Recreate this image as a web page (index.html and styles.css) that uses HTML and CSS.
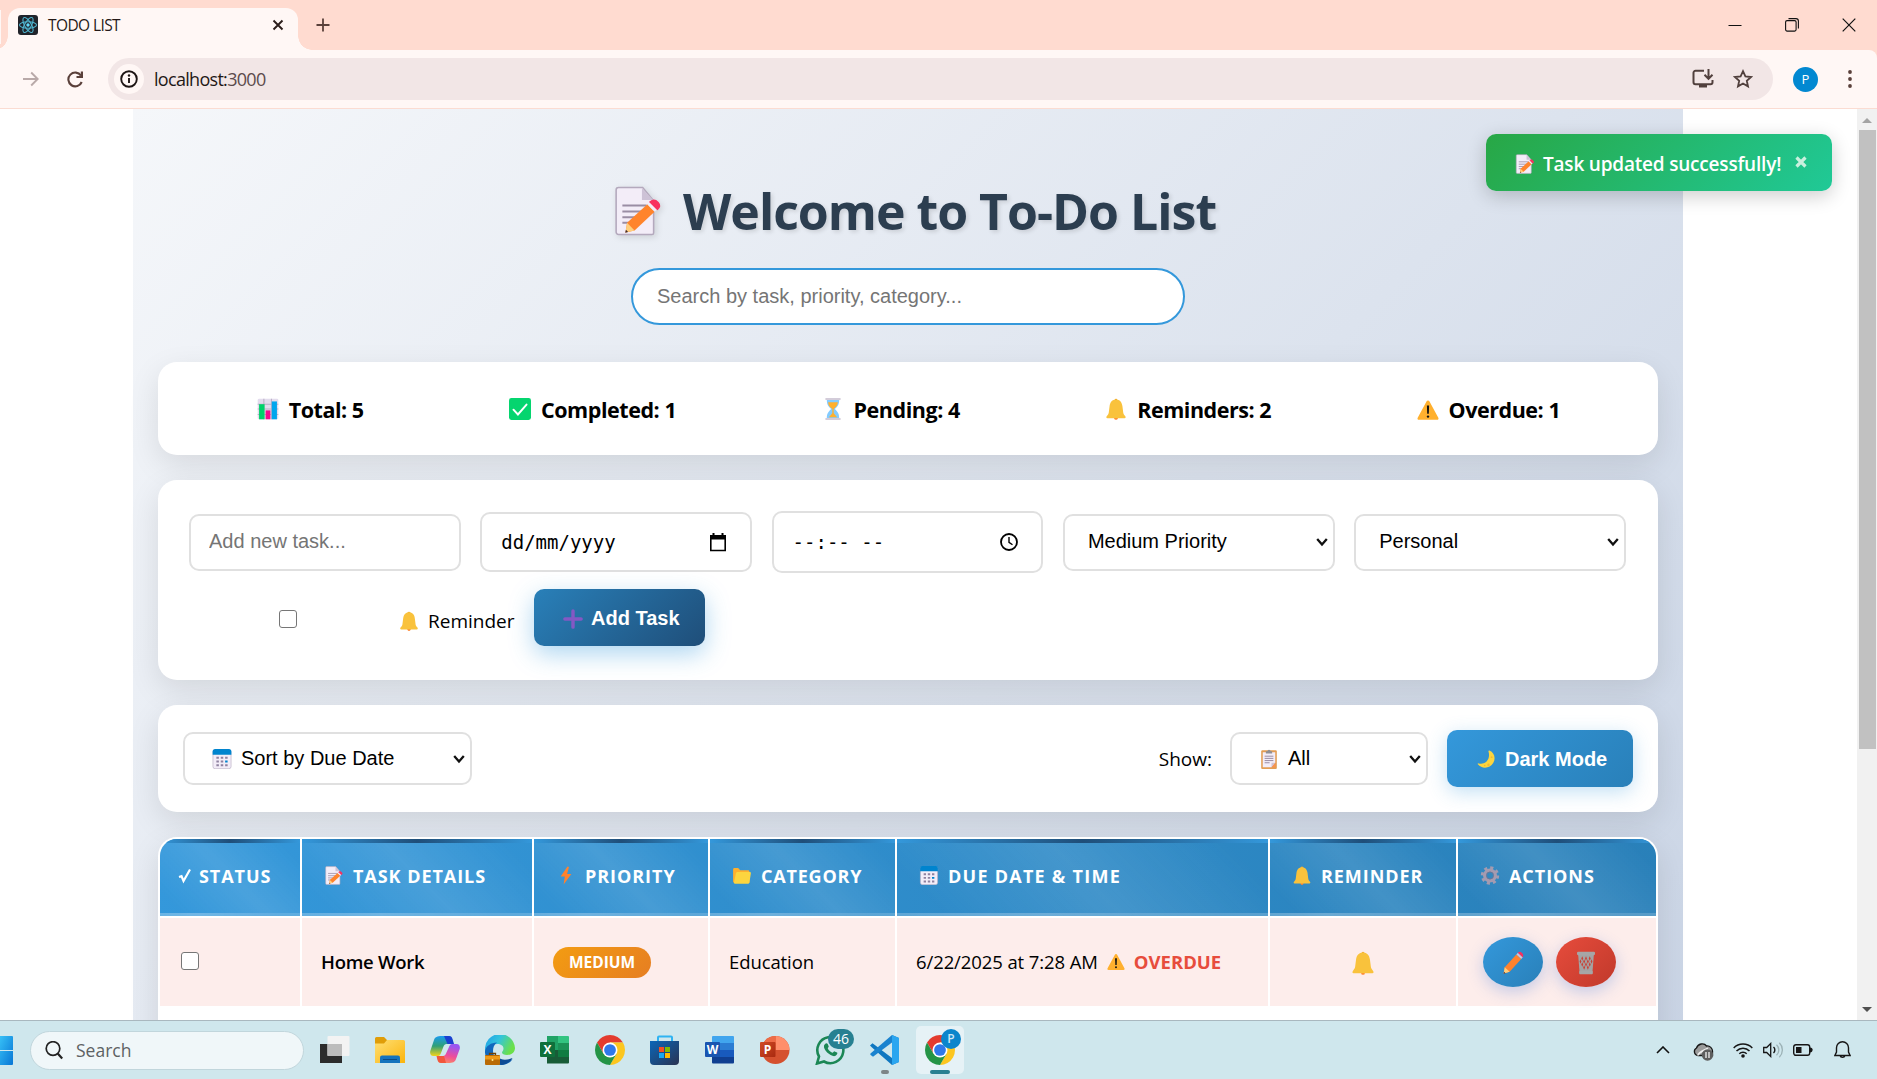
FILE: index.html
```html
<!DOCTYPE html>
<html lang="en">
<head>
<meta charset="utf-8">
<title>TODO LIST</title>
<link rel="stylesheet" href="styles.css">
</head>
<body>
<svg class="defs" aria-hidden="true">
  <defs>
    <linearGradient id="gFolder" x1="0" y1="0" x2="1" y2="1"><stop offset="0" stop-color="#ffdf74"/><stop offset="1" stop-color="#fbb40b"/></linearGradient>
    <linearGradient id="gWin" x1="0" y1="0" x2="1" y2="1"><stop offset="0" stop-color="#37c0f6"/><stop offset="1" stop-color="#0876d5"/></linearGradient>
    <linearGradient id="gStore" x1="0" y1="0" x2="1" y2="1"><stop offset="0" stop-color="#0a66b8"/><stop offset="1" stop-color="#2a3352"/></linearGradient>
    <linearGradient id="gCopA" x1="0" y1="0" x2="0" y2="1"><stop offset="0" stop-color="#1a9bf0"/><stop offset=".5" stop-color="#2f9f76"/><stop offset="1" stop-color="#f2d41c"/></linearGradient>
    <linearGradient id="gCopB" x1=".3" y1="0" x2="0" y2="1"><stop offset="0" stop-color="#9a55f0"/><stop offset=".5" stop-color="#ee4d9a"/><stop offset="1" stop-color="#ff9a55"/></linearGradient>
    <linearGradient id="gEdge" x1="0" y1="0" x2="1" y2=".4"><stop offset="0" stop-color="#1f9de8"/><stop offset=".5" stop-color="#33c4dd"/><stop offset="1" stop-color="#6be04a"/></linearGradient>
    <linearGradient id="gPpt" x1="0" y1="0" x2="1" y2="1"><stop offset="0" stop-color="#cf4a25"/><stop offset="1" stop-color="#a92a10"/></linearGradient>
  </defs>
  <symbol id="memo" viewBox="0 0 32 32">
    <path d="M3.500 1h15.500L26 9.500V30a1 1 0 0 1-1 1H3.500a1.500 1.500 0 0 1-1.500-1.500v-27A1.500 1.500 0 0 1 3.500 1z" fill="#f3edf8" stroke="#b4a9bd"/>
    <path d="M18.500 1.500V9h7.300z" fill="#cdc2d6"/>
    <path d="M6 12.500h15.500M6 16.300h15.500M6 20h11M6 23.500h7" stroke="#9a8da4" stroke-width="1.300"/>
    <path d="M9 23.500l13-11.800 4.600 4.700-12.800 12L8 29.800z" fill="#ff842c"/>
    <path d="M9 23.500l4.800 4.900L8 29.800z" fill="#ffce7c"/><path d="M8.300 28l1.400 1.400-1.900.5z" fill="#402a32"/>
    <path d="M22 11.700l1.800-1.500 4.600 4.700-1.800 1.500z" fill="#f3edf8"/>
    <path d="M23.800 10.200c2-1.700 3.500-1.200 5 .4 1.500 1.700 1.200 3-.4 4.300z" fill="#f8315f" stroke="#f8315f"/>
  </symbol>
  <symbol id="chart" viewBox="0 0 32 32">
    <rect x="1" y="1" width="30" height="30" rx="2" fill="#e3dced"/>
    <path d="M10 1v30M21 1v30M1 9h30M1 16h30M1 24h30" stroke="#b9afc5" stroke-width="1.500"/>
    <path d="M3 9h8v22H3z" fill="#00d26a"/><path d="M12.500 18h7v13h-7z" fill="#f70a8d"/><path d="M21.500 5H29v26h-7.500z" fill="#00a6ed"/>
  </symbol>
  <symbol id="done" viewBox="0 0 32 32">
    <rect width="32" height="32" rx="3.500" fill="#05d56f"/>
    <path d="M6.500 17l6.500 7L25.500 9.500" fill="none" stroke="#fff" stroke-width="2.800" stroke-linecap="round"/>
  </symbol>
  <symbol id="hourglass" viewBox="0 0 32 32">
    <path d="M7 2h18c0 7-1.500 9.500-6.500 14 5 4.500 6.500 7 6.500 14H7c0-7 1.500-9.500 6.500-14C8.500 11.500 7 9 7 2z" fill="#83cbff"/>
    <path d="M9 6h14c0 4-3 7-6 10v6l5 6H10l5-6v-6C11 13 9 10 9 6z" fill="#ffb02e"/>
    <path d="M5 0h22v3H5zM5 29h22v3H5z" fill="#d3ccd9"/>
  </symbol>
  <symbol id="bell" viewBox="0 0 32 32">
    <circle cx="16" cy="29.300" r="2.500" fill="#ff822d"/><circle cx="16" cy="3" r="2" fill="#eda72c"/>
    <path d="M16 2c5.500 0 8.600 4 9.300 9.500l1.200 9.500c.3 2.200 1.300 3.500 3 5.500.8 1 .9 3-1 3h-25c-1.900 0-1.800-2-1-3 1.700-2 2.700-3.300 3-5.500l1.200-9.500C7.400 6 10.500 2 16 2z" fill="#f9c23c"/>
  </symbol>
  <symbol id="warn" viewBox="0 0 32 32">
    <path d="M16 3.500c1 0 1.600.5 2 1.300l13 24c.8 1.700 0 3-1.700 3H2.700c-1.700 0-2.500-1.300-1.700-3l13-24c.4-.8 1-1.300 2-1.300z" fill="#ffb02e"/>
    <path d="M14.400 11h3.200l-.4 12h-2.400z" fill="#111"/><circle cx="16" cy="27" r="1.700" fill="#111"/>
  </symbol>
  <symbol id="plus" viewBox="0 0 32 32"><path d="M16 3v26M3 16h26" stroke="#8458c4" stroke-width="5.500" stroke-linecap="round"/></symbol>
  <symbol id="calendar" viewBox="0 0 32 32">
    <rect x="1.500" y="1.500" width="29" height="30" rx="3.500" fill="#f3edf8" stroke="#b5abc0"/>
    <path d="M1 9V4a4 4 0 0 1 4-4h22a4 4 0 0 1 4 4v5z" fill="#0084ce"/>
    <path d="M7 14h4M14 14h4M21 14h4M7 20h4M14 20h4M7 26h4M14 26h4M21 26h4" stroke="#8f82a0" stroke-width="3.200"/><path d="M21 20h4" stroke="#0084ce" stroke-width="3.200"/>
  </symbol>
  <symbol id="clipboard" viewBox="0 0 32 32">
    <rect x="3.500" y="2" width="25" height="30" rx="1.800" fill="#e39d54"/><path d="M6 5h20v17l-6 7H6z" fill="#f3edf8"/><path d="M20 22h6l-6 7z" fill="#cdc4d6"/><path d="M26 22v7h-6z" fill="#fa9150"/>
    <path d="M11 3.500h2.500a2.500 2.500 0 0 1 5 0H21V7H11z" fill="#8f8f96"/>
    <path d="M9 11.500h14M9 15h14M9 18.500h14M9 22h8" stroke="#9a8da4" stroke-width="1.600"/>
  </symbol>
  <symbol id="moon" viewBox="0 0 32 32">
    <path d="M21.500 2.500c8 3.500 10.500 12.500 6 20C22.500 31 10 33 3 24.500c-.8-1 .2-1.800 1.200-1.500C16 26 23.500 15 20 4c-.3-1 .4-2 1.500-1.500z" fill="#fcd53f"/>
    <circle cx="25" cy="13" r="1.500" fill="#f4b92f"/><circle cx="20" cy="25" r="2" fill="#f4b92f"/><circle cx="14" cy="26.500" r="1.300" fill="#f4b92f"/>
  </symbol>
  <symbol id="bolt" viewBox="0 0 32 32"><path d="M18.500 1L7 17.500h7L12 31l13-17.500h-7.200L21 1.500z" fill="#ff822d"/></symbol>
  <symbol id="folder" viewBox="0 0 32 32">
    <path d="M1 6a2.500 2.500 0 0 1 2.500-2.500h6L13 7h13a2.500 2.500 0 0 1 2.500 2.500V28H3a2 2 0 0 1-2-2z" fill="#ffb02e"/>
    <path d="M8.500 10H29a2 2 0 0 1 2 2.300l-2.500 15.500A2.600 2.600 0 0 1 26 30H4.500a2 2 0 0 1-2-2.300l3.300-15.500A2.800 2.800 0 0 1 8.500 10z" fill="#fcd53f"/>
  </symbol>
  <symbol id="gear" viewBox="0 0 32 32">
    <circle cx="16" cy="16" r="13" fill="none" stroke="#a59bb0" stroke-width="5" stroke-dasharray="5.200 5"/>
    <circle cx="16" cy="16" r="9" fill="none" stroke="#a59bb0" stroke-width="5.500"/><circle cx="16" cy="16" r="6" fill="none" stroke="#7d7189" stroke-width="1.200"/>
  </symbol>
  <symbol id="pencil" viewBox="0 0 32 32">
    <path d="M5 21.500L20.500 4.500l6.500 6L11.500 27.500 3.500 30z" fill="#ff822d"/><path d="M5 21.500l6.500 6-8 2.500z" fill="#ffce7c"/><path d="M4 27.500l2 2-2.500.7z" fill="#402a32"/>
    <path d="M20.500 4.500l2-2.200 6.500 6-2 2.200z" fill="#cdc4d6"/><path d="M22.500 2.300c1.500-1.600 3.300-1.800 5.200 0 2 1.800 2.700 4.300 1.300 6z" fill="#f8315f"/>
  </symbol>
  <symbol id="trash" viewBox="0 0 32 32">
    <path d="M5.500 4h21l-2 25.500h-17z" fill="#a3a3a3"/>
    <path d="M11 7l-1.300 3 1.300 3 1.300-3zM16 7l-1.300 3 1.300 3 1.300-3zM21 7l-1.300 3 1.300 3 1.300-3zM11 15l-1.300 3 1.300 3 1.300-3zM16 15l-1.300 3 1.300 3 1.300-3zM21 15l-1.300 3 1.300 3 1.300-3zM13.500 11l-1.300 3 1.300 3 1.300-3zM18.500 11l-1.300 3 1.300 3 1.300-3zM13.500 19l-1.300 3 1.300 3 1.300-3zM18.500 19l-1.300 3 1.300 3 1.300-3zM8.500 11l-1 3 1 3 1.300-3zM23.500 11l-1.300 3 1.300 3 1-3z" fill="#c94236"/>
    <rect x="4" y="1" width="24" height="4.500" rx="1.500" fill="#a6a6a6"/><rect x="7" y="26.500" width="18" height="4.500" rx="1" fill="#a6a6a6"/>
  </symbol>
  <symbol id="caret" viewBox="0 0 12 10"><path d="M1.200 2L6 7.500 10.800 2" fill="none" stroke="#111" stroke-width="2.300"/></symbol>
  <symbol id="chrome" viewBox="2 2 44 44">
    <path d="M4.950 13A22 22 0 0 1 43.050 13H24V24L14.470 29.500Z" fill="#e33b2e"/>
    <path d="M43.050 13A22 22 0 0 1 24 46L33.530 29.500 24 24V13Z" fill="#fcc61f"/>
    <path d="M24 46A22 22 0 0 1 4.950 13L14.470 29.500 24 24 33.530 29.500Z" fill="#249446"/>
    <circle cx="24" cy="24" r="11" fill="#fff"/><circle cx="24" cy="24" r="8.600" fill="#2f78ea"/>
  </symbol>
</svg>

<header class="tabstrip">
  <div class="prev-tab"></div>
  <div class="tab">
    <svg class="favicon" viewBox="0 0 20 20"><rect width="20" height="20" rx="3" fill="#20232a"/><g fill="none" stroke="#4fb5cf" stroke-width="1.100"><ellipse cx="10" cy="10" rx="8.500" ry="3.300"/><ellipse cx="10" cy="10" rx="8.500" ry="3.300" transform="rotate(60 10 10)"/><ellipse cx="10" cy="10" rx="8.500" ry="3.300" transform="rotate(120 10 10)"/></g><circle cx="10" cy="10" r="1.700" fill="#61dafb"/></svg>
    <span class="tab-title">TODO LIST</span>
    <svg class="tab-close" viewBox="0 0 12 12"><path d="M1.500 1.500l9 9M10.500 1.500l-9 9" stroke="#2b1d1a" stroke-width="1.900"/></svg>
  </div>
  <svg class="new-tab" viewBox="0 0 14 14"><path d="M7 .5v13M.5 7h13" stroke="#5a403a" stroke-width="1.800"/></svg>
  <div class="window-buttons">
    <svg viewBox="0 0 14 14"><path d="M.5 7.500h13" stroke="#111" stroke-width="1"/></svg>
    <svg viewBox="0 0 14 14"><rect x=".6" y="2.600" width="10.500" height="10.500" rx="1.500" fill="none" stroke="#111" stroke-width="1.100"/><path d="M3.500.6h7.500a2.400 2.400 0 0 1 2.400 2.400v7.500" fill="none" stroke="#111" stroke-width="1.100"/></svg>
    <svg viewBox="0 0 14 14"><path d="M.7.7l12.600 12.600M13.300.7L.7 13.300" stroke="#111" stroke-width="1.200"/></svg>
  </div>
</header>

<nav class="toolbar">
  <svg class="forward" viewBox="0 0 16 16"><path d="M0 8h14M8.200 1.500L14.700 8l-6.500 6.500" fill="none" stroke="#b9a9a8" stroke-width="1.900"/></svg>
  <svg class="reload" viewBox="0 0 17 17"><path d="M14.700 11A6.900 6.900 0 1 1 14 4.600" fill="none" stroke="#5a403a" stroke-width="2.100"/><path d="M16 .5v6.500H9.500V5h4.300V.5z" fill="#5a403a"/></svg>
  <div class="address">
    <span class="site-info"><svg viewBox="0 0 18 18"><circle cx="9" cy="9" r="7.800" fill="none" stroke="#1d1514" stroke-width="1.900"/><path d="M9 8v5" stroke="#1d1514" stroke-width="1.900"/><circle cx="9" cy="5.500" r="1.200" fill="#1d1514"/></svg></span>
    <span class="url">localhost:<span class="port">3000</span></span>
    <svg class="install" viewBox="0 0 22 20"><path d="M12 1.800H3.500A2 2 0 0 0 1.500 3.800v9.400a2 2 0 0 0 2 2h15a2 2 0 0 0 2-2V11" fill="none" stroke="#51403d" stroke-width="2"/><path d="M7 15h8v3.500H7z" fill="#51403d"/><path d="M16.500 0v9M12.500 5.800l4 4 4-4" fill="none" stroke="#51403d" stroke-width="2"/></svg>
    <svg class="star" viewBox="0 0 20 20"><path d="M10 2.200l2.400 5.200 5.600.6-4.200 3.800 1.200 5.600-5-2.900-5 2.900 1.200-5.600L2 8l5.600-.6z" fill="none" stroke="#51403d" stroke-width="1.800"/></svg>
  </div>
  <span class="avatar">P</span>
  <svg class="menu" viewBox="0 0 4 18"><g fill="#5a403a"><circle cx="2" cy="2" r="1.900"/><circle cx="2" cy="9" r="1.900"/><circle cx="2" cy="16" r="1.900"/></g></svg>
</nav>

<main class="viewport">
  <div class="app">
    <h1 class="title"><svg class="title-icon"><use href="#memo"/></svg><span>Welcome to To-Do List</span></h1>
    <input class="search" type="text" placeholder="Search by task, priority, category...">

    <section class="card stats">
      <div class="stat"><svg><use href="#chart"/></svg><span>Total: 5</span></div>
      <div class="stat"><svg><use href="#done"/></svg><span>Completed: 1</span></div>
      <div class="stat"><svg><use href="#hourglass"/></svg><span>Pending: 4</span></div>
      <div class="stat"><svg><use href="#bell"/></svg><span>Reminders: 2</span></div>
      <div class="stat"><svg><use href="#warn"/></svg><span>Overdue: 1</span></div>
    </section>

    <section class="card form">
      <div class="fields">
        <input class="field" type="text" placeholder="Add new task...">
        <div class="field date"><span>dd/mm/yyyy</span><svg viewBox="0 0 18 20"><path d="M1.800 4h14.400v14.500H1.800z" fill="none" stroke="#000" stroke-width="1.600"/><path d="M1 3h16v4.500H1zM3.500 1h2v3h-2zM12.500 1h2v3h-2z"/></svg></div>
        <div class="field time"><span>--:-- --</span><svg viewBox="0 0 18 20"><circle cx="9" cy="10" r="8" fill="none" stroke="#000" stroke-width="1.800"/><path d="M9 5v5.300l3.500 2.500" fill="none" stroke="#000" stroke-width="1.400"/></svg></div>
        <div class="field select"><span>Medium Priority</span><svg class="caret"><use href="#caret"/></svg></div>
        <div class="field select"><span>Personal</span><svg class="caret"><use href="#caret"/></svg></div>
      </div>
      <div class="form-actions">
        <span class="checkbox"></span>
        <label class="reminder"><svg><use href="#bell"/></svg><span>Reminder</span></label>
        <button class="btn add"><svg><use href="#plus"/></svg><span>Add Task</span></button>
      </div>
    </section>

    <section class="card controls">
      <div class="select sort"><svg class="emoji"><use href="#calendar"/></svg><span>Sort by Due Date</span><svg class="caret"><use href="#caret"/></svg></div>
      <span class="show">Show:</span>
      <div class="select filter"><svg class="emoji"><use href="#clipboard"/></svg><span>All</span><svg class="caret"><use href="#caret"/></svg></div>
      <button class="btn dark"><svg><use href="#moon"/></svg><span>Dark Mode</span></button>
    </section>

    <section class="table">
      <div class="row head">
        <div class="th first"><svg class="tick" viewBox="0 0 14 16"><path d="M1 9l2.500-.8L5.500 13 12 1.500" fill="none" stroke="#fff" stroke-width="2.200"/></svg><span>STATUS</span></div>
        <div class="th"><svg><use href="#memo"/></svg><span>TASK DETAILS</span></div>
        <div class="th"><svg><use href="#bolt"/></svg><span>PRIORITY</span></div>
        <div class="th"><svg><use href="#folder"/></svg><span class="tight">CATEGORY</span></div>
        <div class="th"><svg><use href="#calendar"/></svg><span class="wide">DUE DATE &amp; TIME</span></div>
        <div class="th"><svg><use href="#bell"/></svg><span>REMINDER</span></div>
        <div class="th"><svg><use href="#gear"/></svg><span>ACTIONS</span></div>
      </div>
      <div class="row body">
        <div class="td"><span class="checkbox"></span></div>
        <div class="td"><span class="task">Home Work</span></div>
        <div class="td"><span class="badge">MEDIUM</span></div>
        <div class="td"><span class="cat">Education</span></div>
        <div class="td"><span class="due">6/22/2025 at 7:28 AM</span><svg class="due-icon"><use href="#warn"/></svg><span class="overdue">OVERDUE</span></div>
        <div class="td center"><svg class="row-bell"><use href="#bell"/></svg></div>
        <div class="td actions"><button class="round edit"><svg><use href="#pencil"/></svg></button><button class="round delete"><svg><use href="#trash"/></svg></button></div>
      </div>
    </section>
  </div>
  <aside class="scrollbar"><span class="up"></span><span class="thumb"></span><span class="down"></span></aside>
  <div class="toast"><svg class="toast-icon"><use href="#memo"/></svg><span class="toast-text">Task updated successfully!</span><svg class="toast-close" viewBox="0 0 12 12"><path d="M1.500 1.500l9 9M10.500 1.500l-9 9" stroke="#c9f0de" stroke-width="3.200"/></svg></div>
</main>

<footer class="taskbar">
  <svg class="start" viewBox="0 0 13 29"><path d="M0 0h12a1 1 0 0 1 1 1v13H0zM0 15h13v13a1 1 0 0 1-1 1H0z" fill="url(#gWin)"/></svg>
  <div class="tb-search"><svg viewBox="0 0 18 19"><circle cx="8" cy="7.500" r="6.800" fill="none" stroke="#222" stroke-width="1.700"/><path d="M12.700 12.500l4.500 5" stroke="#222" stroke-width="2.200"/></svg><span>Search</span></div>
  <div class="apps">
    <svg viewBox="0 0 30 30"><path d="M0 9h22v19H0z" fill="#2c2c2c"/><rect x="7.500" y="1" width="22" height="20" rx="1" fill="#f3f3f3"/><path d="M7.500 9H22v12H7.500z" fill="#bcbcbc"/></svg>
    <svg viewBox="0 0 30 30"><path d="M0 3.500A1.500 1.500 0 0 1 1.500 2H9l3 3v4H0z" fill="#e09d08"/><path d="M0 8.500h9L12 5h16.500A1.500 1.500 0 0 1 30 6.500V28H0z" fill="url(#gFolder)"/><path d="M5 28v-5.500a2 2 0 0 1 2-2h16a2 2 0 0 1 2 2V28z" fill="#1573bd"/><path d="M8 24.500h14" stroke="#0a4b87"/></svg>
    <svg viewBox="0 0 30 30"><path d="M12 1h6.500c2 0 3 1 3.500 3l1.500 5h-7c-1.500 0-2.500 1-3 2.500L11 18c-.8 2.500-2 3-4 3H3.500C.5 21-.3 18.500.3 16L4 5c1-3 3-4 8-4z" fill="url(#gCopA)"/><path d="M14 1h5c2 0 3 1 3.500 3L24 9h-6.500z" fill="#1a3fd0"/><path d="M18 28h-6.500c-2 0-3-1-3.500-3l-1-4h6c1.500 0 2.500-1 3-2.500L19 12c.8-2.500 2-3 4-3h3.500c3 0 3.800 2.500 3.200 5L26 24c-1 3-3 4-8 4z" fill="url(#gCopB)"/><path d="M16 28h-5c-2 0-3-1-3.500-3l-1-4H14z" fill="#f2573c"/></svg>
    <svg viewBox="0 0 30 30"><path d="M0 15A15 15 0 0 1 30 13c0 4-3 7-8 7-3 0-5-1-5-2.500 0-1 1.500-1.500 1.500-4 0-3-3-4.500-6-4.500C6 9 1 14 0 18z" fill="url(#gEdge)"/><path d="M0 16c1-5 6-8.500 12-8.500-3 2-4 5-4 8.500 0 7 6 11 12 10.500 4 0 6-1.500 7.500-2.500-2 4-7 6-12 6C6 30-.5 24 0 16z" fill="#1168bd"/><path d="M13 22c3 3.500 9 3.500 14.500 1-2 4-7 7-12 7z" fill="#0c4b95"/><rect y="20" width="15" height="10" rx="1" fill="#b96a04"/><path d="M0 21h15v3.500H0z" fill="#ed9a19"/><path d="M4.500 20v-1.500h6V20" fill="none" stroke="#6e4208" stroke-width="1.300"/><circle cx="7.500" cy="25" r="1" fill="#ffe78a"/></svg>
    <svg viewBox="0 0 30 30"><path d="M7 1h11v14H7z" fill="#21a366"/><path d="M18 1h10a1 1 0 0 1 1 1v6H18z" fill="#33c481"/><path d="M18 8h11v7H18z" fill="#1c9257"/><path d="M7 15h11v7H7zM7 22h22v5.500a1 1 0 0 1-1 1H7z" fill="#185c37"/><path d="M18 15h11v7H18z" fill="#107c41"/><rect y="7" width="15" height="15" rx="1" fill="#0f703b"/><text x="7.500" y="18.800" class="glyph">X</text></svg>
    <svg><use href="#chrome"/></svg>
    <svg viewBox="0 0 30 30"><path d="M8 7V2.500A1 1 0 0 1 9 1.500h12a1 1 0 0 1 1 1V7" fill="none" stroke="#2fb3f2" stroke-width="2"/><path d="M0 6h29v20a4 4 0 0 1-4 4H4a4 4 0 0 1-4-4z" fill="url(#gStore)"/><path d="M9 12h5v5H9z" fill="#f25022"/><path d="M15 12h5v5h-5z" fill="#7fba00"/><path d="M9 18h5v5H9z" fill="#16a7f2"/><path d="M15 18h5v5h-5z" fill="#ffb900"/></svg>
    <svg viewBox="0 0 30 30"><path d="M7 2a1 1 0 0 1 1-1h20a1 1 0 0 1 1 1v6H7z" fill="#41a5ee"/><path d="M7 8h22v7H7z" fill="#2b7cd3"/><path d="M7 15h22v7H7z" fill="#185abd"/><path d="M7 22h22v5.500a1 1 0 0 1-1 1H8a1 1 0 0 1-1-1z" fill="#103f91"/><rect y="7" width="15" height="15" rx="1" fill="#1a55b0"/><text x="7.500" y="18.800" class="glyph">W</text></svg>
    <svg viewBox="0 0 30 30"><circle cx="15.500" cy="15" r="14" fill="#d5512f"/><path d="M15.500 1a14 14 0 0 1 14 14h-14z" fill="#ff8f6b"/><path d="M15.500 1v14H1.500a14 14 0 0 1 14-14z" fill="#ed6c47"/><rect y="7" width="15.500" height="15" rx="1" fill="url(#gPpt)"/><text x="7.500" y="18.800" class="glyph">P</text></svg>
    <div class="app-badge"><svg viewBox="0 0 30 30"><path d="M2 28.500l2-7A13 13 0 1 1 9 26.500z" fill="none" stroke="#1b8755" stroke-width="2.600"/><path d="M10 9c1-1.200 2.200-1 2.700 0l1 2.300c.3.700-1.200 1.700-.9 2.300 1 2 2.600 3.400 4.600 4.200.7.200 1.500-1.700 2.200-1.400l2.400 1.200c1 .5-.3 3-2 3.500-4 1-12-6-11-10.500z" fill="#1b8755"/></svg><span class="count">46</span></div>
    <svg viewBox="0 0 30 30" class="vscode"><path d="M22 0l7 3v24l-7 3L2 12.500 0 10.500l2.500-2.300L22 23z" fill="#0f77c0"/><path d="M22 0l7 3v24l-7 3z" fill="#2aa6f0"/><path d="M22 7.500L3 21.800.3 19.700l.2-1.200L22 0z" fill="#1a83cf"/></svg>
  </div>
  <div class="active-app"><svg><use href="#chrome"/></svg><span class="profile">P</span></div>
  <div class="tray">
    <svg class="t-up" viewBox="0 0 14 8"><path d="M1 7l6-6 6 6" fill="none" stroke="#111" stroke-width="1.600"/></svg>
    <svg class="t-cloud" viewBox="0 0 21 19"><path d="M5 13.500A4 4 0 0 1 3.500 6C5 1.500 11 .5 13.500 4c3.500-.5 6 2.500 6 5v4.500z" fill="#9b9b9b" stroke="#161616" stroke-width="1.300"/><path d="M5 13.500c0-3 6-5 10-7" stroke="#eee" stroke-width="2" fill="none"/><circle cx="14.500" cy="13" r="5.700" fill="#5d5d5d"/><path d="M13 10v6M16 10v6" stroke="#fff" stroke-width="1.200"/></svg>
    <svg class="t-wifi" viewBox="0 0 20 16"><g fill="none" stroke="#161616" stroke-width="1.500"><path d="M.7 6a13 13 0 0 1 18.600 0M3.500 9a9 9 0 0 1 13 0M6.300 11.800a5.200 5.200 0 0 1 7.400 0"/></g><circle cx="10" cy="14" r="1.800" fill="#161616"/></svg>
    <svg class="t-sound" viewBox="0 0 20 16"><path d="M.7 5.500h3l4-4v13l-4-4h-3z" fill="none" stroke="#161616" stroke-width="1.300"/><path d="M10.500 5a4 4 0 0 1 0 6" fill="none" stroke="#161616" stroke-width="1.400"/><path d="M13.500 2.800a7 7 0 0 1 0 10.400M16.300.8a10 10 0 0 1 0 14.400" fill="none" stroke="#9db3b7" stroke-width="1.300"/></svg>
    <svg class="t-battery" viewBox="0 0 20 12"><rect x=".7" y=".7" width="16" height="10.600" rx="2.200" fill="none" stroke="#161616" stroke-width="1.400"/><rect x="3" y="3" width="5.500" height="6" fill="#161616"/><path d="M17 3.500c4 0 3 5 0 5z" fill="#161616"/></svg>
    <svg class="t-bell" viewBox="0 0 17 18"><path d="M8.500.8a6 6 0 0 1 6 6v4.200l1.600 3.500H.9L2.500 11V6.800a6 6 0 0 1 6-6zM6 14.500a2.600 2.600 0 0 0 5 0" fill="none" stroke="#161616" stroke-width="1.400"/></svg>
  </div>
</footer>
</body>
</html>
```
FILE: styles.css
```css
* { box-sizing: border-box; }
body { margin: 0; width: 1877px; height: 1079px; overflow: hidden; display: flex; flex-direction: column; background: #fff; font-family: "Open Sans", "Noto Sans", sans-serif; color: #000; }
svg { display: block; flex: none; }
span { white-space: nowrap; }
button { border: 0; margin: 0; padding: 0; }
.defs { position: absolute; width: 0; height: 0; }

/* browser chrome */
.tabstrip { height: 50px; flex: none; display: flex; align-items: center; background: #ffdbd0; }
.prev-tab { align-self: flex-start; width: 1px; height: 34px; margin: 10px 7px 0 0; background: #fff7f5; }
.tab { position: relative; align-self: flex-end; width: 290px; height: 42px; display: flex; align-items: center; padding: 0 14px 8px 10px; background: #fff7f5; border-radius: 12px 12px 0 0; }
.tab::before, .tab::after { content: ""; position: absolute; bottom: 0; width: 14px; height: 14px; }
.tab::before { left: -14px; background: radial-gradient(circle at 0 0, transparent 13.500px, #fff7f5 14px); }
.tab::after { right: -14px; background: radial-gradient(circle at 100% 0, transparent 13.500px, #fff7f5 14px); }
.favicon { width: 20px; height: 20px; }
.tab-title { margin-left: 10px; font-size: 15.500px; letter-spacing: -.6px; color: #241917; }
.tab-close { width: 12px; height: 12px; margin-left: auto; }
.new-tab { width: 14px; height: 14px; margin-left: 18px; }
.window-buttons { margin-left: auto; margin-right: 21px; display: flex; gap: 43px; }
.window-buttons svg { width: 14px; height: 14px; }
.toolbar { height: 59px; flex: none; display: flex; align-items: center; background: #fff7f5; border-bottom: 1px solid #fbdcd2; border-top-right-radius: 8px; box-shadow: 8px -8px 0 #ffdbd0; }
.forward { width: 16px; height: 16px; margin-left: 23px; }
.reload { width: 17px; height: 17px; margin-left: 28px; }
.address { width: 1665px; height: 42px; margin-left: 24px; display: flex; align-items: center; background: #f2e6e6; border-radius: 21px; padding: 0 20px 0 6px; }
.site-info { width: 30px; height: 30px; display: flex; align-items: center; justify-content: center; background: #fff7f5; border-radius: 50%; }
.site-info svg { width: 18px; height: 18px; }
.url { margin-left: 10px; font-size: 18px; letter-spacing: -.7px; color: #1f1817; }
.port { color: #5c4b4c; }
.install { width: 22px; height: 20px; margin-left: auto; }
.star { width: 20px; height: 20px; margin-left: 19px; }
.avatar { width: 25px; height: 25px; margin-left: 20px; border-radius: 50%; background: #0288d1; color: #fff; font-size: 13px; line-height: 25px; text-align: center; }
.menu { width: 4px; height: 18px; margin-left: 30px; }

/* page */
.viewport { position: relative; height: 911px; flex: none; display: flex; background: #fff; overflow: hidden; }
.app { width: 1550px; margin-left: 133px; padding: 0 25px; background: linear-gradient(135deg, #f5f7fa 0%, #c3cfe2 100%) 0 0 / 100% 1320px; }
.title { height: 62px; margin: 71px 0 26px; padding-left: 12px; display: flex; align-items: center; justify-content: center; font-size: 50px; line-height: 62px; font-weight: 700; color: #2c3e50; text-shadow: 2px 2px 4px rgba(0,0,0,.12); }
.title span { width: 532px; margin-left: 20px; letter-spacing: -1px; }
.title-icon { width: 50px; height: 50px; filter: drop-shadow(2px 2px 3px rgba(0,0,0,.12)); }
.search { display: block; width: 554px; height: 57px; margin: 0 auto 37px; padding: 0 26px 1px 24px; border: 2px solid #3498db; border-radius: 31px; background: #fff; font: 20px "Liberation Sans", Arial, sans-serif; outline: 0; }
::placeholder { color: #757575; opacity: 1; }
.card { background: #fff; border-radius: 19px; box-shadow: 0 10px 31px rgba(0,0,0,.1); margin-bottom: 25px; }
.stats { height: 93px; padding: 1px 25px 0 26px; display: flex; align-items: center; justify-content: space-around; font-size: 21.500px; font-weight: 700; letter-spacing: -.45px; }
.stat { display: flex; align-items: center; }
.stat svg { width: 22px; height: 22px; margin-right: 10px; }
.form { height: 200px; padding: 31px 32px 0 31px; }
.fields { display: grid; grid-template-columns: repeat(5, 1fr); gap: 19.500px; height: 62px; align-items: center; }
.field { width: 100%; height: 57px; border: 2px solid #e0e0e0; border-radius: 10px; background: #fff; display: flex; align-items: center; padding: 0 18px 1px; font: 20px "Liberation Sans", Arial, sans-serif; outline: 0; }
.date, .time { justify-content: space-between; padding: 0 23px 1px 19px; font: 19px "DejaVu Sans Mono", monospace; }
.date { height: 60px; }
.time { height: 62px; }
.date svg, .time svg { width: 18px; height: 20px; }
.select { display: flex; align-items: center; font: 20px "Liberation Sans", Arial, sans-serif; }
.field.select { padding: 0 5px 1px 23px; }
.caret { width: 12px; height: 10px; margin-left: auto; }
.form-actions { display: flex; align-items: center; height: 57px; margin-top: 16px; }
.checkbox { width: 18px; height: 18px; border: 1.500px solid #767676; border-radius: 3px; background: #fff; }
.form-actions .checkbox { margin: 3px 0 0 90px; }
.reminder { width: 135px; margin: 7px 0 0 102px; display: flex; align-items: center; font-size: 19px; font-weight: 500; }
.reminder svg { width: 20px; height: 20px; margin-right: 9px; }
.btn { display: flex; align-items: center; height: 57px; border-radius: 10px; color: #fff; font: bold 20px "Liberation Sans", Arial, sans-serif; }
.btn svg { width: 20px; height: 20px; }
.add { width: 171px; padding: 2px 0 0 29px; background: linear-gradient(135deg, #2980b9, #1f4e79); box-shadow: 0 8px 25px rgba(52,152,219,.4); }
.add span { margin-left: 8px; }
.controls { height: 107px; padding: 0 25px; display: flex; align-items: center; }
.controls .select { height: 53px; border: 2px solid #e0e0e0; border-radius: 10px; padding: 0 5px 0 27px; }
.emoji { width: 20px; height: 20px; margin-right: 9px; }
.sort { width: 289px; }
.show { margin: 1px 18px 0 auto; font-size: 19px; }
.filter { width: 198px; }
.dark { width: 186px; margin-left: 19px; padding-left: 29px; background: linear-gradient(135deg, #3498db, #2980b9); box-shadow: 0 5px 19px rgba(52,152,219,.3); }
.dark span { margin: 2px 0 0 9px; }

/* task table */
.table { width: 1500px; height: 240px; padding: 2px; background: #fff; border-radius: 19px 19px 0 0; overflow: hidden; box-shadow: 0 10px 31px rgba(0,0,0,.1); }
.row { display: grid; grid-template-columns: 140px 230px 174px 185px 371px 186px 198px; gap: 2px; }
.head { height: 77px; border-radius: 17px 17px 0 0; overflow: hidden; background: linear-gradient(100deg, #3498db, #2980b9); }
.th { position: relative; display: flex; align-items: center; padding: 0 0 1px 22px; color: #fff; font-size: 18px; font-weight: 700; letter-spacing: .95px; box-shadow: 2px 0 0 #fff; border-bottom: 3px solid rgba(255,255,255,.22); background: linear-gradient(45deg, transparent 10%, rgba(255,255,255,.11) 50%, transparent 90%); }
.th::before { content: ""; position: absolute; left: 0; right: 0; top: 0; height: 4px; background: linear-gradient(90deg, #3498db, #1f4e79, #3498db); }
.th svg { width: 20px; height: 19px; margin-right: 9px; }
.th.first { padding-left: 18px; }
.th .tick { width: 14px; height: 16px; margin-right: 7px; }
.tight { letter-spacing: .8px; }
.wide { letter-spacing: 1.250px; }
.body { height: 88px; margin-top: 2px; }
.td { display: flex; align-items: center; padding: 0 0 2px 19px; background: #fdedeb; font-size: 18.500px; }
.body .checkbox { margin: -1px 0 0 2px; }
.task { font-weight: 600; letter-spacing: -.25px; }
.badge { width: 98px; height: 31px; line-height: 31px; border-radius: 16px; text-align: center; color: #fff; font-size: 15.500px; font-weight: 700; background: linear-gradient(135deg, #f39c12, #e67e22); margin-top: 3px; }
.due { letter-spacing: -.1px; }
.due-icon { width: 20px; height: 18px; margin: 0 8px; }
.overdue { color: #e74c3c; font-weight: 700; }
.cat { letter-spacing: -.1px; }
.center { justify-content: center; padding-left: 0; }
.row-bell { width: 24px; height: 24px; margin-top: 3px; }
.actions { padding: 0 0 0 25px; gap: 13px; }
.round { width: 60px; height: 50px; border-radius: 50%; display: flex; align-items: center; justify-content: center; box-shadow: 0 5px 16px rgba(52,110,219,.28); }
.round svg { width: 24px; height: 24px; margin-top: 2px; }
.edit { background: linear-gradient(135deg, #3498db, #2980b9); }
.delete { background: linear-gradient(135deg, #e74c3c, #c0392b); }

.scrollbar { width: 20px; margin-left: auto; background: #f1f1f1; display: flex; flex-direction: column; align-items: center; }
.up { border: 5px solid transparent; border-top: 0; border-bottom: 5px solid #a3a3a3; margin-top: 9px; }
.thumb { width: 17px; height: 619px; margin-top: 7px; background: #c1c1c1; }
.down { border: 5px solid transparent; border-bottom: 0; border-top: 5px solid #505050; margin-top: auto; margin-bottom: 8px; }
.toast { position: absolute; left: 1486px; top: 25px; width: 346px; height: 57px; display: flex; align-items: center; border-radius: 10px; padding-left: 29px; background: linear-gradient(135deg, #28a745, #20c997); box-shadow: 0 5px 19px rgba(0,0,0,.2); color: #fff; font-size: 19px; font-weight: 600; letter-spacing: -.2px; }
.toast-icon { width: 20px; height: 20px; margin: 3px 8px 0 0; }
.toast-text { margin-top: 2px; width: 239px; }
.toast-close { width: 12px; height: 12px; margin: 0 0 2px 13px; }

/* system taskbar */
.taskbar { position: relative; height: 59px; flex: none; display: flex; align-items: center; background: #cfe7ed; border-top: 1px solid #a9b8bf; }
.start { width: 13px; height: 29px; }
.tb-search { width: 274px; height: 39px; margin-left: 17px; display: flex; align-items: center; padding-left: 14px; border-radius: 20px; background: #f0f7f9; border: 1px solid #c1d6dc; font-size: 17.500px; color: #5d6263; }
.tb-search svg { width: 18px; height: 19px; margin-right: 13px; }
.apps { display: flex; gap: 25px; margin-left: 16px; }
.apps svg { width: 30px; height: 30px; }
.glyph { font: bold 12px "Open Sans", sans-serif; fill: #fff; text-anchor: middle; }
.app-badge { position: relative; }
.count { position: absolute; left: 13px; top: -6px; width: 26px; height: 20px; border-radius: 10px; background: #278091; color: #fff; font-size: 14px; line-height: 20px; text-align: center; }
.active-app { position: relative; width: 48px; height: 48px; margin-left: 16px; padding: 9px; border-radius: 5px; background: #e6f2f6; }
.active-app svg { width: 30px; height: 30px; }
.active-app::after { content: ""; position: absolute; left: 14px; bottom: 0; width: 20px; height: 4px; border-radius: 2px; background: #278091; }
.active-app::before { content: ""; position: absolute; left: -35px; bottom: 0; width: 8px; height: 4px; border-radius: 2px; background: #7c8587; }
.profile { position: absolute; left: 25px; top: 3px; width: 20px; height: 20px; border-radius: 50%; background: #0a85cc; color: #cde6f5; font-size: 12px; font-weight: 600; line-height: 20px; text-align: center; }
.tray { margin-left: auto; margin-right: 26px; display: flex; align-items: center; }
.t-up { width: 14px; height: 8px; margin-right: 23px; }
.t-cloud { width: 21px; height: 19px; margin: 2px 19px 0 0; }
.t-wifi { width: 20px; height: 16px; margin-right: 10px; }
.t-sound { width: 20px; height: 16px; margin-right: 10px; }
.t-battery { width: 20px; height: 12px; margin-right: 21px; }
.t-bell { width: 17px; height: 18px; }
```
